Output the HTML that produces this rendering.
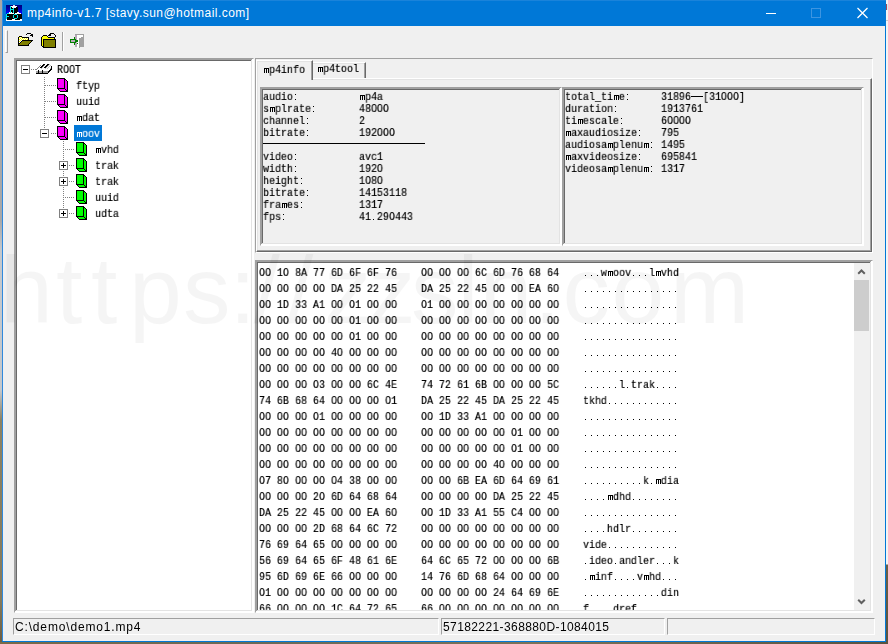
<!DOCTYPE html>
<html><head><meta charset="utf-8"><title>mp4info</title>
<style>
*{margin:0;padding:0;box-sizing:border-box}
html,body{width:888px;height:644px;overflow:hidden}
body{position:relative;background:#f0f0f0;font-family:"Liberation Sans",sans-serif;font-size:12px;color:#000}
body div,body span,body svg{position:absolute}
svg{overflow:visible}
#desk-l{left:0;top:0;width:2px;height:644px;background:linear-gradient(#a8a8a8 0,#a8a8a8 220px,#c4c8cc 250px,#c4c8cc 390px,#8c8263 420px,#857a5c 600px,#6b5c40 100%)}
#desk-b{left:0;top:642px;width:888px;height:2px;background:linear-gradient(90deg,#7a6a48,#6a6a58 30%,#7c7258 60%,#5a5340 100%)}
#desk-r{left:886px;top:0;width:2px;height:644px;background:linear-gradient(#f4f4f4 0,#f4f4f4 564px,#6a6048 565px,#5a5340 100%)}
#bl{left:2px;top:0;width:1px;height:642px;background:#2f89dd}
#bt{left:2px;top:0;width:884px;height:1px;background:#1a83da}
#br{left:885px;top:0;width:1px;height:642px;background:#0078d7}
#bb{left:2px;top:641px;width:884px;height:1px;background:#0078d7}
#title{left:3px;top:0;width:882px;height:26px;background:#0078d7}
#ttext{left:27px;top:6px;color:#fff;font-size:12px;white-space:nowrap;line-height:15px;letter-spacing:.46px}
.m{will-change:transform;-webkit-text-stroke:.2px #000;font-family:"Liberation Mono",monospace;font-size:12px;line-height:12px;white-space:pre;transform:translateY(1px) scale(.8333,.889);transform-origin:0 0;color:#000}
.w{color:#fff;-webkit-text-stroke-color:#fff}
.sel{width:28px;height:16px;background:#0078d7}
.sunk{border:1px solid;border-color:#a0a0a0 #fff #fff #a0a0a0;box-shadow:inset -1px -1px 0 #fff,inset 1px 1px 0 #a0a0a0,inset -2px -2px 0 #e3e3e3,inset 2px 2px 0 #696969}
.sunk>.in{left:2px;top:2px;right:2px;bottom:2px;overflow:hidden}
.pane{height:17px;border:1px solid;border-color:#a0a0a0 #fff #fff #a0a0a0}
.hr{left:0;height:12px;width:600px}
.st{font-size:12px;line-height:14px;white-space:nowrap}
#wm{left:0;top:235px;width:888px;height:110px;font-size:95px;line-height:110px;color:rgba(0,0,0,.04);white-space:nowrap}
#wm span{top:0}
</style></head><body>
<div id="desk-l"></div><div id="desk-b"></div><div id="desk-r"></div>
<div style="left:886px;top:4px;width:1px;height:6px;background:#a04858"></div><div style="left:887px;top:4px;width:1px;height:6px;background:#c8f0f8"></div><div style="left:886px;top:20px;width:2px;height:1px;background:#c8c8c8"></div><div id="bl"></div><div id="br"></div><div id="bb"></div>
<div id="title"></div><div id="bt"></div>
<div id="ttext">mp4info-v1.7 [stavy.sun@hotmail.com]</div>
<!-- app icon -->
<div style="left:6px;top:5px;width:16px;height:16px;background:linear-gradient(#000078 0,#0000a8 25%,#0000f0 45%,#0000ff 100%)"></div><svg style="left:6px;top:5px" width="16" height="16" viewBox="0 0 16 16" shape-rendering="crispEdges"><path fill="#e8e0e8" d="M7 0h2v1h-2z"/><path fill="#00e8e8" d="M4 1h1v1h-1zM4 2h1v1h-1zM4 3h1v1h-1zM7 3h1v1h-1zM4 4h4v1h-4zM4 5h1v1h-1zM7 5h1v1h-1zM4 6h1v1h-1zM7 6h1v1h-1zM4 7h1v1h-1zM7 7h1v1h-1zM1 8h2v1h-2zM0 9h1v1h-1zM8 9h3v1h-3zM0 10h1v1h-1zM7 10h1v1h-1zM11 10h1v1h-1zM0 11h3v1h-3zM7 11h1v1h-1zM11 11h1v1h-1zM0 12h1v1h-1zM7 12h1v1h-1zM11 12h1v1h-1zM0 13h1v1h-1zM8 13h3v1h-3z"/><path fill="#fff" d="M5 1h6v1h-6zM6 2h4v1h-4zM3 7h1v1h-1zM5 7h1v1h-1zM11 7h2v1h-2zM3 8h5v1h-5zM9 8h6v1h-6zM0 14h1v1h-1zM6 14h3v1h-3zM14 14h2v1h-2zM0 15h16v1h-16z"/><path fill="#000" d="M5 2h1v1h-1zM10 2h2v1h-2zM5 3h2v1h-2zM8 3h4v1h-4zM8 4h4v1h-4zM5 5h2v1h-2zM8 5h4v1h-4zM5 6h2v1h-2zM8 6h4v1h-4zM6 7h1v1h-1zM8 7h3v1h-3zM8 8h1v1h-1zM1 9h7v1h-7zM11 9h5v1h-5zM1 10h6v1h-6zM8 10h3v1h-3zM12 10h4v1h-4zM3 11h4v1h-4zM8 11h3v1h-3zM12 11h4v1h-4zM1 12h6v1h-6zM8 12h3v1h-3zM12 12h4v1h-4zM1 13h7v1h-7zM11 13h5v1h-5zM1 14h5v1h-5zM9 14h5v1h-5z"/></svg>
<!-- caption buttons -->
<svg style="left:760px;top:0" width="125" height="26" viewBox="0 0 125 26">
 <path d="M6 13.5H16" stroke="#fff" stroke-width="1" fill="none" shape-rendering="crispEdges"/>
 <rect x="51.5" y="8.5" width="9" height="9" stroke="#3d95e1" stroke-width="1" fill="none" shape-rendering="crispEdges"/>
 <path d="M97.5 8L107.5 18M107.5 8L97.5 18" stroke="#fff" stroke-width="1.25" fill="none"/>
</svg>
<!-- toolbar -->
<div style="left:5px;top:30px;width:3px;height:23px;border:1px solid;border-color:#fff #a0a0a0 #a0a0a0 #fff"></div>
<div style="left:62px;top:32px;width:2px;height:19px;border-left:1px solid #a0a0a0;border-right:1px solid #fff"></div>
<svg style="left:18px;top:33px" width="15" height="13" viewBox="0 0 15 13" shape-rendering="crispEdges"><path fill="#000" d="M9 0h4v1h-4zM8 1h1v1h-1zM13 1h2v1h-2zM12 2h3v1h-3zM1 3h3v1h-3zM14 3h1v1h-1zM0 4h1v1h-1zM4 4h7v1h-7zM0 5h1v1h-1zM10 5h1v1h-1zM0 6h1v1h-1zM10 6h1v1h-1zM0 7h1v1h-1zM4 7h11v1h-11zM0 8h1v1h-1zM3 8h1v1h-1zM13 8h1v1h-1zM0 9h1v1h-1zM2 9h1v1h-1zM12 9h1v1h-1zM0 10h2v1h-2zM11 10h1v1h-1zM0 11h1v1h-1zM10 11h1v1h-1zM0 12h11v1h-11z"/><path fill="#ffff00" d="M1 4h1v1h-1zM3 4h1v1h-1zM2 5h1v1h-1zM4 5h1v1h-1zM6 5h1v1h-1zM8 5h1v1h-1zM1 6h1v1h-1zM3 6h1v1h-1zM5 6h1v1h-1zM7 6h1v1h-1zM9 6h1v1h-1zM2 7h1v1h-1zM1 8h1v1h-1z"/><path fill="#fff" d="M2 4h1v1h-1zM1 5h1v1h-1zM3 5h1v1h-1zM5 5h1v1h-1zM7 5h1v1h-1zM9 5h1v1h-1zM2 6h1v1h-1zM4 6h1v1h-1zM6 6h1v1h-1zM8 6h1v1h-1zM1 7h1v1h-1zM3 7h1v1h-1zM2 8h1v1h-1zM1 9h1v1h-1z"/><path fill="#808000" d="M4 8h9v1h-9zM3 9h9v1h-9zM2 10h9v1h-9zM1 11h9v1h-9z"/></svg><svg style="left:41px;top:33px" width="15" height="15" viewBox="0 0 15 15" shape-rendering="crispEdges"><path fill="#000" d="M9 0h4v1h-4zM8 1h2v1h-2zM13 1h1v1h-1zM2 2h4v1h-4zM7 2h3v1h-3zM14 2h1v1h-1zM1 3h1v1h-1zM6 3h1v1h-1zM14 3h1v1h-1zM0 4h1v1h-1zM7 4h7v1h-7zM0 5h1v1h-1zM13 5h1v1h-1zM0 6h1v1h-1zM2 6h13v1h-13zM0 7h1v1h-1zM2 7h1v1h-1zM14 7h1v1h-1zM0 8h1v1h-1zM2 8h1v1h-1zM14 8h1v1h-1zM0 9h1v1h-1zM2 9h1v1h-1zM14 9h1v1h-1zM0 10h1v1h-1zM2 10h1v1h-1zM14 10h1v1h-1zM0 11h1v1h-1zM2 11h1v1h-1zM14 11h1v1h-1zM0 12h1v1h-1zM2 12h1v1h-1zM14 12h1v1h-1zM1 13h2v1h-2zM14 13h1v1h-1zM2 14h13v1h-13z"/><path fill="#ffff00" d="M2 3h4v1h-4zM1 4h6v1h-6zM1 5h12v1h-12zM1 6h1v1h-1zM1 7h1v1h-1zM1 8h1v1h-1zM1 9h1v1h-1zM1 10h1v1h-1zM1 11h1v1h-1zM1 12h1v1h-1z"/><path fill="#808000" d="M3 7h11v1h-11zM3 8h11v1h-11zM3 9h11v1h-11zM3 10h11v1h-11zM3 11h11v1h-11zM3 12h11v1h-11zM3 13h11v1h-11z"/></svg><svg style="left:70px;top:34px" width="14" height="14" viewBox="0 0 14 14" shape-rendering="crispEdges"><path fill="#a0a0a0" d="M5 0h9v1h-9zM13 1h1v1h-1zM13 2h1v1h-1zM11 3h3v1h-3zM9 4h5v1h-5zM9 5h5v1h-5zM9 6h5v1h-5zM9 7h5v1h-5zM9 8h5v1h-5zM9 9h5v1h-5zM9 10h5v1h-5zM9 11h5v1h-5zM9 12h5v1h-5zM9 13h1v1h-1z"/><path fill="#b8a8b8" d="M5 1h2v1h-2zM5 2h2v1h-2zM5 3h2v1h-2zM5 4h2v1h-2zM6 5h1v1h-1zM1 6h4v1h-4zM1 7h4v1h-4zM6 8h1v1h-1zM5 9h2v1h-2zM5 10h2v1h-2zM5 11h2v1h-2zM5 12h2v1h-2z"/><path fill="#fff" d="M7 1h6v1h-6zM7 2h6v1h-6zM7 3h4v1h-4zM7 4h2v1h-2zM7 5h2v1h-2zM8 6h1v1h-1zM8 7h1v1h-1zM7 8h2v1h-2zM8 9h1v1h-1zM7 10h2v1h-2zM7 11h2v1h-2zM7 12h2v1h-2zM7 13h2v1h-2z"/><path fill="#008000" d="M4 3h1v1h-1zM4 4h1v1h-1zM0 5h6v1h-6zM0 6h1v1h-1zM5 6h3v1h-3zM0 7h1v1h-1zM5 7h3v1h-3zM0 8h6v1h-6zM4 9h1v1h-1zM7 9h1v1h-1zM4 10h1v1h-1z"/></svg>

<!-- tree -->
<div class="sunk" style="left:14px;top:58px;width:240px;height:555px"><div class="in" style="background:#fff"></div></div>
<div style="left:44px;top:77px;width:1px;height:51px;background:repeating-linear-gradient(180deg,#808080 0 1px,transparent 1px 2px)"></div>
<div style="left:63px;top:141px;width:1px;height:69px;background:repeating-linear-gradient(180deg,#808080 0 1px,transparent 1px 2px)"></div>
<div style="left:31px;top:69px;width:5px;height:1px;background:repeating-linear-gradient(90deg,#808080 0 1px,transparent 1px 2px)"></div>
<div style="left:21px;top:65px;width:9px;height:9px;border:1px solid #808080;background:#fff"></div><div style="left:23px;top:69px;width:5px;height:1px;background:#000"></div>
<svg style="left:36px;top:64px" width="17" height="10" viewBox="0 0 17 10" shape-rendering="crispEdges"><path fill="#000" d="M7 0h2v1h-2zM11 0h2v1h-2zM6 1h2v1h-2zM10 1h2v1h-2zM5 2h2v1h-2zM9 2h2v1h-2zM15 2h1v1h-1zM4 3h2v1h-2zM8 3h2v1h-2zM15 3h1v1h-1zM15 4h1v1h-1zM14 5h2v1h-2zM2 6h1v1h-1zM6 6h1v1h-1zM13 6h2v1h-2zM2 7h1v1h-1zM6 7h1v1h-1zM12 7h2v1h-2zM2 8h1v1h-1zM6 8h1v1h-1zM12 8h1v1h-1zM0 9h12v1h-12z"/><path fill="#c0c0c0" d="M13 0h1v1h-1zM8 1h1v1h-1zM12 1h1v1h-1zM14 1h1v1h-1zM7 2h1v1h-1zM11 2h1v1h-1zM13 2h1v1h-1zM6 3h1v1h-1zM10 3h1v1h-1zM12 3h1v1h-1zM5 4h1v1h-1zM9 4h1v1h-1zM11 4h1v1h-1zM14 4h1v1h-1z"/><path fill="#808080" d="M4 1h1v1h-1zM3 2h1v1h-1zM2 3h1v1h-1zM1 4h1v1h-1zM0 5h1v1h-1z"/><path fill="#a0a0a0" d="M0 7h2v1h-2zM3 7h3v1h-3zM7 7h5v1h-5zM0 8h2v1h-2zM3 8h3v1h-3zM7 8h5v1h-5z"/></svg>
<span class="m" style="left:57px;top:64px">ROOT</span>
<div style="left:45px;top:85px;width:11px;height:1px;background:repeating-linear-gradient(90deg,#808080 0 1px,transparent 1px 2px)"></div>
<svg style="left:57px;top:78px" width="11" height="14" viewBox="0 0 11 14" shape-rendering="crispEdges"><path fill="#000" d="M0 0h8v1h-8zM0 1h1v1h-1zM7 1h2v1h-2zM0 2h1v1h-1zM7 2h1v1h-1zM9 2h1v1h-1zM0 3h1v1h-1zM7 3h1v1h-1zM10 3h1v1h-1zM0 4h1v1h-1zM7 4h1v1h-1zM10 4h1v1h-1zM0 5h1v1h-1zM7 5h1v1h-1zM10 5h1v1h-1zM0 6h1v1h-1zM7 6h1v1h-1zM10 6h1v1h-1zM0 7h1v1h-1zM7 7h1v1h-1zM10 7h1v1h-1zM0 8h1v1h-1zM7 8h1v1h-1zM10 8h1v1h-1zM0 9h1v1h-1zM7 9h1v1h-1zM10 9h1v1h-1zM0 10h8v1h-8zM10 10h1v1h-1zM1 11h1v1h-1zM8 11h1v1h-1zM10 11h1v1h-1zM2 12h1v1h-1zM9 12h2v1h-2zM3 13h8v1h-8z"/><path fill="#ff00ff" d="M1 1h6v1h-6zM1 2h6v1h-6zM8 2h1v1h-1zM1 3h6v1h-6zM8 3h2v1h-2zM1 4h6v1h-6zM8 4h2v1h-2zM1 5h6v1h-6zM8 5h2v1h-2zM1 6h6v1h-6zM8 6h2v1h-2zM1 7h6v1h-6zM8 7h2v1h-2zM1 8h6v1h-6zM8 8h2v1h-2zM1 9h6v1h-6zM8 9h2v1h-2zM8 10h2v1h-2zM2 11h6v1h-6zM9 11h1v1h-1zM3 12h6v1h-6z"/></svg>
<span class="m" style="left:76px;top:80px">ftyp</span>
<div style="left:45px;top:101px;width:11px;height:1px;background:repeating-linear-gradient(90deg,#808080 0 1px,transparent 1px 2px)"></div>
<svg style="left:57px;top:94px" width="11" height="14" viewBox="0 0 11 14" shape-rendering="crispEdges"><path fill="#000" d="M0 0h8v1h-8zM0 1h1v1h-1zM7 1h2v1h-2zM0 2h1v1h-1zM7 2h1v1h-1zM9 2h1v1h-1zM0 3h1v1h-1zM7 3h1v1h-1zM10 3h1v1h-1zM0 4h1v1h-1zM7 4h1v1h-1zM10 4h1v1h-1zM0 5h1v1h-1zM7 5h1v1h-1zM10 5h1v1h-1zM0 6h1v1h-1zM7 6h1v1h-1zM10 6h1v1h-1zM0 7h1v1h-1zM7 7h1v1h-1zM10 7h1v1h-1zM0 8h1v1h-1zM7 8h1v1h-1zM10 8h1v1h-1zM0 9h1v1h-1zM7 9h1v1h-1zM10 9h1v1h-1zM0 10h8v1h-8zM10 10h1v1h-1zM1 11h1v1h-1zM8 11h1v1h-1zM10 11h1v1h-1zM2 12h1v1h-1zM9 12h2v1h-2zM3 13h8v1h-8z"/><path fill="#ff00ff" d="M1 1h6v1h-6zM1 2h6v1h-6zM8 2h1v1h-1zM1 3h6v1h-6zM8 3h2v1h-2zM1 4h6v1h-6zM8 4h2v1h-2zM1 5h6v1h-6zM8 5h2v1h-2zM1 6h6v1h-6zM8 6h2v1h-2zM1 7h6v1h-6zM8 7h2v1h-2zM1 8h6v1h-6zM8 8h2v1h-2zM1 9h6v1h-6zM8 9h2v1h-2zM8 10h2v1h-2zM2 11h6v1h-6zM9 11h1v1h-1zM3 12h6v1h-6z"/></svg>
<span class="m" style="left:76px;top:96px">uuid</span>
<div style="left:45px;top:117px;width:11px;height:1px;background:repeating-linear-gradient(90deg,#808080 0 1px,transparent 1px 2px)"></div>
<svg style="left:57px;top:110px" width="11" height="14" viewBox="0 0 11 14" shape-rendering="crispEdges"><path fill="#000" d="M0 0h8v1h-8zM0 1h1v1h-1zM7 1h2v1h-2zM0 2h1v1h-1zM7 2h1v1h-1zM9 2h1v1h-1zM0 3h1v1h-1zM7 3h1v1h-1zM10 3h1v1h-1zM0 4h1v1h-1zM7 4h1v1h-1zM10 4h1v1h-1zM0 5h1v1h-1zM7 5h1v1h-1zM10 5h1v1h-1zM0 6h1v1h-1zM7 6h1v1h-1zM10 6h1v1h-1zM0 7h1v1h-1zM7 7h1v1h-1zM10 7h1v1h-1zM0 8h1v1h-1zM7 8h1v1h-1zM10 8h1v1h-1zM0 9h1v1h-1zM7 9h1v1h-1zM10 9h1v1h-1zM0 10h8v1h-8zM10 10h1v1h-1zM1 11h1v1h-1zM8 11h1v1h-1zM10 11h1v1h-1zM2 12h1v1h-1zM9 12h2v1h-2zM3 13h8v1h-8z"/><path fill="#ff00ff" d="M1 1h6v1h-6zM1 2h6v1h-6zM8 2h1v1h-1zM1 3h6v1h-6zM8 3h2v1h-2zM1 4h6v1h-6zM8 4h2v1h-2zM1 5h6v1h-6zM8 5h2v1h-2zM1 6h6v1h-6zM8 6h2v1h-2zM1 7h6v1h-6zM8 7h2v1h-2zM1 8h6v1h-6zM8 8h2v1h-2zM1 9h6v1h-6zM8 9h2v1h-2zM8 10h2v1h-2zM2 11h6v1h-6zM9 11h1v1h-1zM3 12h6v1h-6z"/></svg>
<span class="m" style="left:76px;top:112px"> dat</span><svg style="left:76px;top:115px" width="24" height="6" viewBox="0 0 24 6" shape-rendering="crispEdges"><path fill="#000" d="M1 1h5v1h-5zM1 2h1v1h-1zM3 2h1v1h-1zM5 2h1v1h-1zM1 3h1v1h-1zM3 3h1v1h-1zM5 3h1v1h-1zM1 4h1v1h-1zM3 4h1v1h-1zM5 4h1v1h-1zM1 5h1v1h-1zM3 5h1v1h-1zM5 5h1v1h-1z"/></svg>
<div style="left:51px;top:133px;width:5px;height:1px;background:repeating-linear-gradient(90deg,#808080 0 1px,transparent 1px 2px)"></div>
<div style="left:40px;top:129px;width:9px;height:9px;border:1px solid #808080;background:#fff"></div><div style="left:42px;top:133px;width:5px;height:1px;background:#000"></div>
<svg style="left:57px;top:126px" width="11" height="14" viewBox="0 0 11 14" shape-rendering="crispEdges"><path fill="#000" d="M0 0h8v1h-8zM0 1h1v1h-1zM7 1h2v1h-2zM0 2h1v1h-1zM7 2h1v1h-1zM9 2h1v1h-1zM0 3h1v1h-1zM7 3h1v1h-1zM10 3h1v1h-1zM0 4h1v1h-1zM7 4h1v1h-1zM10 4h1v1h-1zM0 5h1v1h-1zM7 5h1v1h-1zM10 5h1v1h-1zM0 6h1v1h-1zM7 6h1v1h-1zM10 6h1v1h-1zM0 7h1v1h-1zM7 7h1v1h-1zM10 7h1v1h-1zM0 8h1v1h-1zM7 8h1v1h-1zM10 8h1v1h-1zM0 9h1v1h-1zM7 9h1v1h-1zM10 9h1v1h-1zM0 10h8v1h-8zM10 10h1v1h-1zM1 11h1v1h-1zM8 11h1v1h-1zM10 11h1v1h-1zM2 12h1v1h-1zM9 12h2v1h-2zM3 13h8v1h-8z"/><path fill="#ff00ff" d="M1 1h6v1h-6zM1 2h6v1h-6zM8 2h1v1h-1zM1 3h6v1h-6zM8 3h2v1h-2zM1 4h6v1h-6zM8 4h2v1h-2zM1 5h6v1h-6zM8 5h2v1h-2zM1 6h6v1h-6zM8 6h2v1h-2zM1 7h6v1h-6zM8 7h2v1h-2zM1 8h6v1h-6zM8 8h2v1h-2zM1 9h6v1h-6zM8 9h2v1h-2zM8 10h2v1h-2zM2 11h6v1h-6zM9 11h1v1h-1zM3 12h6v1h-6z"/></svg>
<div class="sel" style="left:74px;top:125px"></div><span class="m w" style="left:76px;top:128px"> oov</span><svg style="left:76px;top:131px" width="24" height="6" viewBox="0 0 24 6" shape-rendering="crispEdges"><path fill="#fff" d="M1 1h5v1h-5zM1 2h1v1h-1zM3 2h1v1h-1zM5 2h1v1h-1zM1 3h1v1h-1zM3 3h1v1h-1zM5 3h1v1h-1zM1 4h1v1h-1zM3 4h1v1h-1zM5 4h1v1h-1zM1 5h1v1h-1zM3 5h1v1h-1zM5 5h1v1h-1z"/></svg>
<div style="left:65px;top:149px;width:10px;height:1px;background:repeating-linear-gradient(90deg,#808080 0 1px,transparent 1px 2px)"></div>
<svg style="left:76px;top:142px" width="11" height="14" viewBox="0 0 11 14" shape-rendering="crispEdges"><path fill="#000" d="M0 0h8v1h-8zM0 1h1v1h-1zM7 1h2v1h-2zM0 2h1v1h-1zM7 2h1v1h-1zM9 2h1v1h-1zM0 3h1v1h-1zM7 3h1v1h-1zM10 3h1v1h-1zM0 4h1v1h-1zM7 4h1v1h-1zM10 4h1v1h-1zM0 5h1v1h-1zM7 5h1v1h-1zM10 5h1v1h-1zM0 6h1v1h-1zM7 6h1v1h-1zM10 6h1v1h-1zM0 7h1v1h-1zM7 7h1v1h-1zM10 7h1v1h-1zM0 8h1v1h-1zM7 8h1v1h-1zM10 8h1v1h-1zM0 9h1v1h-1zM7 9h1v1h-1zM10 9h1v1h-1zM0 10h8v1h-8zM10 10h1v1h-1zM1 11h1v1h-1zM8 11h1v1h-1zM10 11h1v1h-1zM2 12h1v1h-1zM9 12h2v1h-2zM3 13h8v1h-8z"/><path fill="#00ff00" d="M1 1h6v1h-6zM1 2h6v1h-6zM8 2h1v1h-1zM1 3h6v1h-6zM8 3h2v1h-2zM1 4h6v1h-6zM8 4h2v1h-2zM1 5h6v1h-6zM8 5h2v1h-2zM1 6h6v1h-6zM8 6h2v1h-2zM1 7h6v1h-6zM8 7h2v1h-2zM1 8h6v1h-6zM8 8h2v1h-2zM1 9h6v1h-6zM8 9h2v1h-2zM8 10h2v1h-2zM2 11h6v1h-6zM9 11h1v1h-1zM3 12h6v1h-6z"/></svg>
<span class="m" style="left:95px;top:144px"> vhd</span><svg style="left:95px;top:147px" width="24" height="6" viewBox="0 0 24 6" shape-rendering="crispEdges"><path fill="#000" d="M1 1h5v1h-5zM1 2h1v1h-1zM3 2h1v1h-1zM5 2h1v1h-1zM1 3h1v1h-1zM3 3h1v1h-1zM5 3h1v1h-1zM1 4h1v1h-1zM3 4h1v1h-1zM5 4h1v1h-1zM1 5h1v1h-1zM3 5h1v1h-1zM5 5h1v1h-1z"/></svg>
<div style="left:69px;top:165px;width:6px;height:1px;background:repeating-linear-gradient(90deg,#808080 0 1px,transparent 1px 2px)"></div>
<div style="left:59px;top:161px;width:9px;height:9px;border:1px solid #808080;background:#fff"></div><div style="left:61px;top:165px;width:5px;height:1px;background:#000"></div><div style="left:63px;top:163px;width:1px;height:5px;background:#000"></div>
<svg style="left:76px;top:158px" width="11" height="14" viewBox="0 0 11 14" shape-rendering="crispEdges"><path fill="#000" d="M0 0h8v1h-8zM0 1h1v1h-1zM7 1h2v1h-2zM0 2h1v1h-1zM7 2h1v1h-1zM9 2h1v1h-1zM0 3h1v1h-1zM7 3h1v1h-1zM10 3h1v1h-1zM0 4h1v1h-1zM7 4h1v1h-1zM10 4h1v1h-1zM0 5h1v1h-1zM7 5h1v1h-1zM10 5h1v1h-1zM0 6h1v1h-1zM7 6h1v1h-1zM10 6h1v1h-1zM0 7h1v1h-1zM7 7h1v1h-1zM10 7h1v1h-1zM0 8h1v1h-1zM7 8h1v1h-1zM10 8h1v1h-1zM0 9h1v1h-1zM7 9h1v1h-1zM10 9h1v1h-1zM0 10h8v1h-8zM10 10h1v1h-1zM1 11h1v1h-1zM8 11h1v1h-1zM10 11h1v1h-1zM2 12h1v1h-1zM9 12h2v1h-2zM3 13h8v1h-8z"/><path fill="#00ff00" d="M1 1h6v1h-6zM1 2h6v1h-6zM8 2h1v1h-1zM1 3h6v1h-6zM8 3h2v1h-2zM1 4h6v1h-6zM8 4h2v1h-2zM1 5h6v1h-6zM8 5h2v1h-2zM1 6h6v1h-6zM8 6h2v1h-2zM1 7h6v1h-6zM8 7h2v1h-2zM1 8h6v1h-6zM8 8h2v1h-2zM1 9h6v1h-6zM8 9h2v1h-2zM8 10h2v1h-2zM2 11h6v1h-6zM9 11h1v1h-1zM3 12h6v1h-6z"/></svg>
<span class="m" style="left:95px;top:160px">trak</span>
<div style="left:69px;top:181px;width:6px;height:1px;background:repeating-linear-gradient(90deg,#808080 0 1px,transparent 1px 2px)"></div>
<div style="left:59px;top:177px;width:9px;height:9px;border:1px solid #808080;background:#fff"></div><div style="left:61px;top:181px;width:5px;height:1px;background:#000"></div><div style="left:63px;top:179px;width:1px;height:5px;background:#000"></div>
<svg style="left:76px;top:174px" width="11" height="14" viewBox="0 0 11 14" shape-rendering="crispEdges"><path fill="#000" d="M0 0h8v1h-8zM0 1h1v1h-1zM7 1h2v1h-2zM0 2h1v1h-1zM7 2h1v1h-1zM9 2h1v1h-1zM0 3h1v1h-1zM7 3h1v1h-1zM10 3h1v1h-1zM0 4h1v1h-1zM7 4h1v1h-1zM10 4h1v1h-1zM0 5h1v1h-1zM7 5h1v1h-1zM10 5h1v1h-1zM0 6h1v1h-1zM7 6h1v1h-1zM10 6h1v1h-1zM0 7h1v1h-1zM7 7h1v1h-1zM10 7h1v1h-1zM0 8h1v1h-1zM7 8h1v1h-1zM10 8h1v1h-1zM0 9h1v1h-1zM7 9h1v1h-1zM10 9h1v1h-1zM0 10h8v1h-8zM10 10h1v1h-1zM1 11h1v1h-1zM8 11h1v1h-1zM10 11h1v1h-1zM2 12h1v1h-1zM9 12h2v1h-2zM3 13h8v1h-8z"/><path fill="#00ff00" d="M1 1h6v1h-6zM1 2h6v1h-6zM8 2h1v1h-1zM1 3h6v1h-6zM8 3h2v1h-2zM1 4h6v1h-6zM8 4h2v1h-2zM1 5h6v1h-6zM8 5h2v1h-2zM1 6h6v1h-6zM8 6h2v1h-2zM1 7h6v1h-6zM8 7h2v1h-2zM1 8h6v1h-6zM8 8h2v1h-2zM1 9h6v1h-6zM8 9h2v1h-2zM8 10h2v1h-2zM2 11h6v1h-6zM9 11h1v1h-1zM3 12h6v1h-6z"/></svg>
<span class="m" style="left:95px;top:176px">trak</span>
<div style="left:65px;top:197px;width:10px;height:1px;background:repeating-linear-gradient(90deg,#808080 0 1px,transparent 1px 2px)"></div>
<svg style="left:76px;top:190px" width="11" height="14" viewBox="0 0 11 14" shape-rendering="crispEdges"><path fill="#000" d="M0 0h8v1h-8zM0 1h1v1h-1zM7 1h2v1h-2zM0 2h1v1h-1zM7 2h1v1h-1zM9 2h1v1h-1zM0 3h1v1h-1zM7 3h1v1h-1zM10 3h1v1h-1zM0 4h1v1h-1zM7 4h1v1h-1zM10 4h1v1h-1zM0 5h1v1h-1zM7 5h1v1h-1zM10 5h1v1h-1zM0 6h1v1h-1zM7 6h1v1h-1zM10 6h1v1h-1zM0 7h1v1h-1zM7 7h1v1h-1zM10 7h1v1h-1zM0 8h1v1h-1zM7 8h1v1h-1zM10 8h1v1h-1zM0 9h1v1h-1zM7 9h1v1h-1zM10 9h1v1h-1zM0 10h8v1h-8zM10 10h1v1h-1zM1 11h1v1h-1zM8 11h1v1h-1zM10 11h1v1h-1zM2 12h1v1h-1zM9 12h2v1h-2zM3 13h8v1h-8z"/><path fill="#00ff00" d="M1 1h6v1h-6zM1 2h6v1h-6zM8 2h1v1h-1zM1 3h6v1h-6zM8 3h2v1h-2zM1 4h6v1h-6zM8 4h2v1h-2zM1 5h6v1h-6zM8 5h2v1h-2zM1 6h6v1h-6zM8 6h2v1h-2zM1 7h6v1h-6zM8 7h2v1h-2zM1 8h6v1h-6zM8 8h2v1h-2zM1 9h6v1h-6zM8 9h2v1h-2zM8 10h2v1h-2zM2 11h6v1h-6zM9 11h1v1h-1zM3 12h6v1h-6z"/></svg>
<span class="m" style="left:95px;top:192px">uuid</span>
<div style="left:69px;top:213px;width:6px;height:1px;background:repeating-linear-gradient(90deg,#808080 0 1px,transparent 1px 2px)"></div>
<div style="left:59px;top:209px;width:9px;height:9px;border:1px solid #808080;background:#fff"></div><div style="left:61px;top:213px;width:5px;height:1px;background:#000"></div><div style="left:63px;top:211px;width:1px;height:5px;background:#000"></div>
<svg style="left:76px;top:206px" width="11" height="14" viewBox="0 0 11 14" shape-rendering="crispEdges"><path fill="#000" d="M0 0h8v1h-8zM0 1h1v1h-1zM7 1h2v1h-2zM0 2h1v1h-1zM7 2h1v1h-1zM9 2h1v1h-1zM0 3h1v1h-1zM7 3h1v1h-1zM10 3h1v1h-1zM0 4h1v1h-1zM7 4h1v1h-1zM10 4h1v1h-1zM0 5h1v1h-1zM7 5h1v1h-1zM10 5h1v1h-1zM0 6h1v1h-1zM7 6h1v1h-1zM10 6h1v1h-1zM0 7h1v1h-1zM7 7h1v1h-1zM10 7h1v1h-1zM0 8h1v1h-1zM7 8h1v1h-1zM10 8h1v1h-1zM0 9h1v1h-1zM7 9h1v1h-1zM10 9h1v1h-1zM0 10h8v1h-8zM10 10h1v1h-1zM1 11h1v1h-1zM8 11h1v1h-1zM10 11h1v1h-1zM2 12h1v1h-1zM9 12h2v1h-2zM3 13h8v1h-8z"/><path fill="#00ff00" d="M1 1h6v1h-6zM1 2h6v1h-6zM8 2h1v1h-1zM1 3h6v1h-6zM8 3h2v1h-2zM1 4h6v1h-6zM8 4h2v1h-2zM1 5h6v1h-6zM8 5h2v1h-2zM1 6h6v1h-6zM8 6h2v1h-2zM1 7h6v1h-6zM8 7h2v1h-2zM1 8h6v1h-6zM8 8h2v1h-2zM1 9h6v1h-6zM8 9h2v1h-2zM8 10h2v1h-2zM2 11h6v1h-6zM9 11h1v1h-1zM3 12h6v1h-6z"/></svg>
<span class="m" style="left:95px;top:208px">udta</span>

<!-- tab control -->
<div style="left:255px;top:58px;width:618px;height:195px;border:1px solid;border-color:#a0a0a0 #fff #fff #a0a0a0"></div>
<div style="left:256px;top:78px;width:616px;height:174px;border:1px solid;border-color:#fff #696969 #696969 #fff;box-shadow:inset -1px -1px 0 #a0a0a0,inset 1px 1px 0 #e3e3e3"></div>
<!-- tabs -->
<div style="left:313px;top:62px;width:53px;height:16px;border:1px solid;border-color:#fff #696969 transparent #fff;border-bottom:none;border-left:none;box-shadow:inset -1px 0 0 #a0a0a0,inset 0 1px 0 #e3e3e3"></div>
<div style="left:256px;top:60px;width:57px;height:20px;background:#f0f0f0;border:1px solid;border-color:#fff #696969 transparent #fff;border-bottom:none;box-shadow:inset -1px 0 0 #a0a0a0,inset 1px 1px 0 #e3e3e3"></div>
<span class="m" style="left:263px;top:64px"> p4info</span><svg style="left:263px;top:67px" width="42" height="6" viewBox="0 0 42 6" shape-rendering="crispEdges"><path fill="#000" d="M1 1h5v1h-5zM1 2h1v1h-1zM3 2h1v1h-1zM5 2h1v1h-1zM1 3h1v1h-1zM3 3h1v1h-1zM5 3h1v1h-1zM1 4h1v1h-1zM3 4h1v1h-1zM5 4h1v1h-1zM1 5h1v1h-1zM3 5h1v1h-1zM5 5h1v1h-1z"/></svg>
<span class="m" style="left:317px;top:63px"> p4tool</span><svg style="left:317px;top:66px" width="42" height="6" viewBox="0 0 42 6" shape-rendering="crispEdges"><path fill="#000" d="M1 1h5v1h-5zM1 2h1v1h-1zM3 2h1v1h-1zM5 2h1v1h-1zM1 3h1v1h-1zM3 3h1v1h-1zM5 3h1v1h-1zM1 4h1v1h-1zM3 4h1v1h-1zM5 4h1v1h-1zM1 5h1v1h-1zM3 5h1v1h-1zM5 5h1v1h-1z"/></svg>
<!-- info panels -->
<div class="sunk" style="left:260px;top:87px;width:302px;height:159px"><div class="in"></div></div>
<div class="sunk" style="left:562px;top:87px;width:302px;height:159px"><div class="in"></div></div>
<span class="m" style="left:263px;top:91px">audio </span><svg style="left:263px;top:94px" width="36" height="6" viewBox="0 0 36 6" shape-rendering="crispEdges"><path fill="#000" d="M32 0h1v1h-1zM32 5h1v1h-1z"/></svg><span class="m" style="left:359px;top:91px"> p4a</span><svg style="left:359px;top:94px" width="24" height="6" viewBox="0 0 24 6" shape-rendering="crispEdges"><path fill="#000" d="M1 1h5v1h-5zM1 2h1v1h-1zM3 2h1v1h-1zM5 2h1v1h-1zM1 3h1v1h-1zM3 3h1v1h-1zM5 3h1v1h-1zM1 4h1v1h-1zM3 4h1v1h-1zM5 4h1v1h-1zM1 5h1v1h-1zM3 5h1v1h-1zM5 5h1v1h-1z"/></svg>
<span class="m" style="left:263px;top:103px">s plrate </span><svg style="left:263px;top:106px" width="54" height="6" viewBox="0 0 54 6" shape-rendering="crispEdges"><path fill="#000" d="M50 0h1v1h-1zM7 1h5v1h-5zM7 2h1v1h-1zM9 2h1v1h-1zM11 2h1v1h-1zM7 3h1v1h-1zM9 3h1v1h-1zM11 3h1v1h-1zM7 4h1v1h-1zM9 4h1v1h-1zM11 4h1v1h-1zM7 5h1v1h-1zM9 5h1v1h-1zM11 5h1v1h-1zM50 5h1v1h-1z"/></svg><span class="m" style="left:359px;top:103px">48OOO</span>
<span class="m" style="left:263px;top:115px">channel </span><svg style="left:263px;top:118px" width="48" height="6" viewBox="0 0 48 6" shape-rendering="crispEdges"><path fill="#000" d="M44 0h1v1h-1zM44 5h1v1h-1z"/></svg><span class="m" style="left:359px;top:115px">2</span>
<span class="m" style="left:263px;top:127px">bitrate </span><svg style="left:263px;top:130px" width="48" height="6" viewBox="0 0 48 6" shape-rendering="crispEdges"><path fill="#000" d="M44 0h1v1h-1zM44 5h1v1h-1z"/></svg><span class="m" style="left:359px;top:127px">192OOO</span>
<div style="left:263px;top:143px;width:162px;height:1px;background:#000"></div>
<span class="m" style="left:263px;top:151px">video </span><svg style="left:263px;top:154px" width="36" height="6" viewBox="0 0 36 6" shape-rendering="crispEdges"><path fill="#000" d="M32 0h1v1h-1zM32 5h1v1h-1z"/></svg><span class="m" style="left:359px;top:151px">avc1</span>
<span class="m" style="left:263px;top:163px">width </span><svg style="left:263px;top:166px" width="36" height="6" viewBox="0 0 36 6" shape-rendering="crispEdges"><path fill="#000" d="M32 0h1v1h-1zM32 5h1v1h-1z"/></svg><span class="m" style="left:359px;top:163px">192O</span>
<span class="m" style="left:263px;top:175px">height </span><svg style="left:263px;top:178px" width="42" height="6" viewBox="0 0 42 6" shape-rendering="crispEdges"><path fill="#000" d="M38 0h1v1h-1zM38 5h1v1h-1z"/></svg><span class="m" style="left:359px;top:175px">1O8O</span>
<span class="m" style="left:263px;top:187px">bitrate </span><svg style="left:263px;top:190px" width="48" height="6" viewBox="0 0 48 6" shape-rendering="crispEdges"><path fill="#000" d="M44 0h1v1h-1zM44 5h1v1h-1z"/></svg><span class="m" style="left:359px;top:187px">14153118</span>
<span class="m" style="left:263px;top:199px">fra es </span><svg style="left:263px;top:202px" width="42" height="6" viewBox="0 0 42 6" shape-rendering="crispEdges"><path fill="#000" d="M38 0h1v1h-1zM19 1h5v1h-5zM19 2h1v1h-1zM21 2h1v1h-1zM23 2h1v1h-1zM19 3h1v1h-1zM21 3h1v1h-1zM23 3h1v1h-1zM19 4h1v1h-1zM21 4h1v1h-1zM23 4h1v1h-1zM19 5h1v1h-1zM21 5h1v1h-1zM23 5h1v1h-1zM38 5h1v1h-1z"/></svg><span class="m" style="left:359px;top:199px">1317</span>
<span class="m" style="left:263px;top:211px">fps </span><svg style="left:263px;top:214px" width="24" height="6" viewBox="0 0 24 6" shape-rendering="crispEdges"><path fill="#000" d="M20 0h1v1h-1zM20 5h1v1h-1z"/></svg><span class="m" style="left:359px;top:211px">41 29O443</span><svg style="left:359px;top:214px" width="54" height="6" viewBox="0 0 54 6" shape-rendering="crispEdges"><path fill="#000" d="M14 5h1v1h-1z"/></svg>
<span class="m" style="left:565px;top:91px">total_ti e </span><svg style="left:565px;top:94px" width="66" height="6" viewBox="0 0 66 6" shape-rendering="crispEdges"><path fill="#000" d="M62 0h1v1h-1zM49 1h5v1h-5zM49 2h1v1h-1zM51 2h1v1h-1zM53 2h1v1h-1zM49 3h1v1h-1zM51 3h1v1h-1zM53 3h1v1h-1zM49 4h1v1h-1zM51 4h1v1h-1zM53 4h1v1h-1zM49 5h1v1h-1zM51 5h1v1h-1zM53 5h1v1h-1zM62 5h1v1h-1z"/></svg><span class="m" style="left:661px;top:91px">31896</span>
<span class="m" style="left:565px;top:103px">duration </span><svg style="left:565px;top:106px" width="54" height="6" viewBox="0 0 54 6" shape-rendering="crispEdges"><path fill="#000" d="M50 0h1v1h-1zM50 5h1v1h-1z"/></svg><span class="m" style="left:661px;top:103px">1913761</span>
<span class="m" style="left:565px;top:115px">ti escale </span><svg style="left:565px;top:118px" width="60" height="6" viewBox="0 0 60 6" shape-rendering="crispEdges"><path fill="#000" d="M56 0h1v1h-1zM13 1h5v1h-5zM13 2h1v1h-1zM15 2h1v1h-1zM17 2h1v1h-1zM13 3h1v1h-1zM15 3h1v1h-1zM17 3h1v1h-1zM13 4h1v1h-1zM15 4h1v1h-1zM17 4h1v1h-1zM13 5h1v1h-1zM15 5h1v1h-1zM17 5h1v1h-1zM56 5h1v1h-1z"/></svg><span class="m" style="left:661px;top:115px">6OOOO</span>
<span class="m" style="left:565px;top:127px"> axaudiosize </span><svg style="left:565px;top:130px" width="78" height="6" viewBox="0 0 78 6" shape-rendering="crispEdges"><path fill="#000" d="M74 0h1v1h-1zM1 1h5v1h-5zM1 2h1v1h-1zM3 2h1v1h-1zM5 2h1v1h-1zM1 3h1v1h-1zM3 3h1v1h-1zM5 3h1v1h-1zM1 4h1v1h-1zM3 4h1v1h-1zM5 4h1v1h-1zM1 5h1v1h-1zM3 5h1v1h-1zM5 5h1v1h-1zM74 5h1v1h-1z"/></svg><span class="m" style="left:661px;top:127px">795</span>
<span class="m" style="left:565px;top:139px">audiosa plenu  </span><svg style="left:565px;top:142px" width="90" height="6" viewBox="0 0 90 6" shape-rendering="crispEdges"><path fill="#000" d="M86 0h1v1h-1zM43 1h5v1h-5zM79 1h5v1h-5zM43 2h1v1h-1zM45 2h1v1h-1zM47 2h1v1h-1zM79 2h1v1h-1zM81 2h1v1h-1zM83 2h1v1h-1zM43 3h1v1h-1zM45 3h1v1h-1zM47 3h1v1h-1zM79 3h1v1h-1zM81 3h1v1h-1zM83 3h1v1h-1zM43 4h1v1h-1zM45 4h1v1h-1zM47 4h1v1h-1zM79 4h1v1h-1zM81 4h1v1h-1zM83 4h1v1h-1zM43 5h1v1h-1zM45 5h1v1h-1zM47 5h1v1h-1zM79 5h1v1h-1zM81 5h1v1h-1zM83 5h1v1h-1zM86 5h1v1h-1z"/></svg><span class="m" style="left:661px;top:139px">1495</span>
<span class="m" style="left:565px;top:151px"> axvideosize </span><svg style="left:565px;top:154px" width="78" height="6" viewBox="0 0 78 6" shape-rendering="crispEdges"><path fill="#000" d="M74 0h1v1h-1zM1 1h5v1h-5zM1 2h1v1h-1zM3 2h1v1h-1zM5 2h1v1h-1zM1 3h1v1h-1zM3 3h1v1h-1zM5 3h1v1h-1zM1 4h1v1h-1zM3 4h1v1h-1zM5 4h1v1h-1zM1 5h1v1h-1zM3 5h1v1h-1zM5 5h1v1h-1zM74 5h1v1h-1z"/></svg><span class="m" style="left:661px;top:151px">695841</span>
<span class="m" style="left:565px;top:163px">videosa plenu  </span><svg style="left:565px;top:166px" width="90" height="6" viewBox="0 0 90 6" shape-rendering="crispEdges"><path fill="#000" d="M86 0h1v1h-1zM43 1h5v1h-5zM79 1h5v1h-5zM43 2h1v1h-1zM45 2h1v1h-1zM47 2h1v1h-1zM79 2h1v1h-1zM81 2h1v1h-1zM83 2h1v1h-1zM43 3h1v1h-1zM45 3h1v1h-1zM47 3h1v1h-1zM79 3h1v1h-1zM81 3h1v1h-1zM83 3h1v1h-1zM43 4h1v1h-1zM45 4h1v1h-1zM47 4h1v1h-1zM79 4h1v1h-1zM81 4h1v1h-1zM83 4h1v1h-1zM43 5h1v1h-1zM45 5h1v1h-1zM47 5h1v1h-1zM79 5h1v1h-1zM81 5h1v1h-1zM83 5h1v1h-1zM86 5h1v1h-1z"/></svg><span class="m" style="left:661px;top:163px">1317</span>
<div style="left:691px;top:96px;width:12px;height:1px;background:#000"></div><span class="m" style="left:703px;top:91px">[31OOO]</span>

<!-- hex -->
<div class="sunk" style="left:255px;top:260px;width:618px;height:353px"><div class="in" style="background:#fff">
<div class="hr" style="top:4px"><span class="m" style="left:0.5px">OO 1O 8A 77 6D 6F 6F 76</span><span class="m" style="left:162.5px">OO OO OO 6C 6D 76 68 64</span><span class="m" style="left:324.5px">   w oov   l vhd</span><svg style="left:325px;top:3px" width="96" height="6" viewBox="0 0 96 6" shape-rendering="crispEdges"><path fill="#000" d="M25 1h5v1h-5zM73 1h5v1h-5zM25 2h1v1h-1zM27 2h1v1h-1zM29 2h1v1h-1zM73 2h1v1h-1zM75 2h1v1h-1zM77 2h1v1h-1zM25 3h1v1h-1zM27 3h1v1h-1zM29 3h1v1h-1zM73 3h1v1h-1zM75 3h1v1h-1zM77 3h1v1h-1zM25 4h1v1h-1zM27 4h1v1h-1zM29 4h1v1h-1zM73 4h1v1h-1zM75 4h1v1h-1zM77 4h1v1h-1zM2 5h1v1h-1zM8 5h1v1h-1zM14 5h1v1h-1zM25 5h1v1h-1zM27 5h1v1h-1zM29 5h1v1h-1zM50 5h1v1h-1zM56 5h1v1h-1zM62 5h1v1h-1zM73 5h1v1h-1zM75 5h1v1h-1zM77 5h1v1h-1z"/></svg></div>
<div class="hr" style="top:20px"><span class="m" style="left:0.5px">OO OO OO OO DA 25 22 45</span><span class="m" style="left:162.5px">DA 25 22 45 OO OO EA 6O</span><span class="m" style="left:324.5px">                </span><svg style="left:325px;top:3px" width="96" height="6" viewBox="0 0 96 6" shape-rendering="crispEdges"><path fill="#000" d="M2 5h1v1h-1zM8 5h1v1h-1zM14 5h1v1h-1zM20 5h1v1h-1zM26 5h1v1h-1zM32 5h1v1h-1zM38 5h1v1h-1zM44 5h1v1h-1zM50 5h1v1h-1zM56 5h1v1h-1zM62 5h1v1h-1zM68 5h1v1h-1zM74 5h1v1h-1zM80 5h1v1h-1zM86 5h1v1h-1zM92 5h1v1h-1z"/></svg></div>
<div class="hr" style="top:36px"><span class="m" style="left:0.5px">OO 1D 33 A1 OO O1 OO OO</span><span class="m" style="left:162.5px">O1 OO OO OO OO OO OO OO</span><span class="m" style="left:324.5px">                </span><svg style="left:325px;top:3px" width="96" height="6" viewBox="0 0 96 6" shape-rendering="crispEdges"><path fill="#000" d="M2 5h1v1h-1zM8 5h1v1h-1zM14 5h1v1h-1zM20 5h1v1h-1zM26 5h1v1h-1zM32 5h1v1h-1zM38 5h1v1h-1zM44 5h1v1h-1zM50 5h1v1h-1zM56 5h1v1h-1zM62 5h1v1h-1zM68 5h1v1h-1zM74 5h1v1h-1zM80 5h1v1h-1zM86 5h1v1h-1zM92 5h1v1h-1z"/></svg></div>
<div class="hr" style="top:52px"><span class="m" style="left:0.5px">OO OO OO OO OO O1 OO OO</span><span class="m" style="left:162.5px">OO OO OO OO OO OO OO OO</span><span class="m" style="left:324.5px">                </span><svg style="left:325px;top:3px" width="96" height="6" viewBox="0 0 96 6" shape-rendering="crispEdges"><path fill="#000" d="M2 5h1v1h-1zM8 5h1v1h-1zM14 5h1v1h-1zM20 5h1v1h-1zM26 5h1v1h-1zM32 5h1v1h-1zM38 5h1v1h-1zM44 5h1v1h-1zM50 5h1v1h-1zM56 5h1v1h-1zM62 5h1v1h-1zM68 5h1v1h-1zM74 5h1v1h-1zM80 5h1v1h-1zM86 5h1v1h-1zM92 5h1v1h-1z"/></svg></div>
<div class="hr" style="top:68px"><span class="m" style="left:0.5px">OO OO OO OO OO O1 OO OO</span><span class="m" style="left:162.5px">OO OO OO OO OO OO OO OO</span><span class="m" style="left:324.5px">                </span><svg style="left:325px;top:3px" width="96" height="6" viewBox="0 0 96 6" shape-rendering="crispEdges"><path fill="#000" d="M2 5h1v1h-1zM8 5h1v1h-1zM14 5h1v1h-1zM20 5h1v1h-1zM26 5h1v1h-1zM32 5h1v1h-1zM38 5h1v1h-1zM44 5h1v1h-1zM50 5h1v1h-1zM56 5h1v1h-1zM62 5h1v1h-1zM68 5h1v1h-1zM74 5h1v1h-1zM80 5h1v1h-1zM86 5h1v1h-1zM92 5h1v1h-1z"/></svg></div>
<div class="hr" style="top:84px"><span class="m" style="left:0.5px">OO OO OO OO 4O OO OO OO</span><span class="m" style="left:162.5px">OO OO OO OO OO OO OO OO</span><span class="m" style="left:324.5px">                </span><svg style="left:325px;top:3px" width="96" height="6" viewBox="0 0 96 6" shape-rendering="crispEdges"><path fill="#000" d="M2 5h1v1h-1zM8 5h1v1h-1zM14 5h1v1h-1zM20 5h1v1h-1zM26 5h1v1h-1zM32 5h1v1h-1zM38 5h1v1h-1zM44 5h1v1h-1zM50 5h1v1h-1zM56 5h1v1h-1zM62 5h1v1h-1zM68 5h1v1h-1zM74 5h1v1h-1zM80 5h1v1h-1zM86 5h1v1h-1zM92 5h1v1h-1z"/></svg></div>
<div class="hr" style="top:100px"><span class="m" style="left:0.5px">OO OO OO OO OO OO OO OO</span><span class="m" style="left:162.5px">OO OO OO OO OO OO OO OO</span><span class="m" style="left:324.5px">                </span><svg style="left:325px;top:3px" width="96" height="6" viewBox="0 0 96 6" shape-rendering="crispEdges"><path fill="#000" d="M2 5h1v1h-1zM8 5h1v1h-1zM14 5h1v1h-1zM20 5h1v1h-1zM26 5h1v1h-1zM32 5h1v1h-1zM38 5h1v1h-1zM44 5h1v1h-1zM50 5h1v1h-1zM56 5h1v1h-1zM62 5h1v1h-1zM68 5h1v1h-1zM74 5h1v1h-1zM80 5h1v1h-1zM86 5h1v1h-1zM92 5h1v1h-1z"/></svg></div>
<div class="hr" style="top:116px"><span class="m" style="left:0.5px">OO OO OO O3 OO OO 6C 4E</span><span class="m" style="left:162.5px">74 72 61 6B OO OO OO 5C</span><span class="m" style="left:324.5px">      l trak    </span><svg style="left:325px;top:3px" width="96" height="6" viewBox="0 0 96 6" shape-rendering="crispEdges"><path fill="#000" d="M2 5h1v1h-1zM8 5h1v1h-1zM14 5h1v1h-1zM20 5h1v1h-1zM26 5h1v1h-1zM32 5h1v1h-1zM44 5h1v1h-1zM74 5h1v1h-1zM80 5h1v1h-1zM86 5h1v1h-1zM92 5h1v1h-1z"/></svg></div>
<div class="hr" style="top:132px"><span class="m" style="left:0.5px">74 6B 68 64 OO OO OO O1</span><span class="m" style="left:162.5px">DA 25 22 45 DA 25 22 45</span><span class="m" style="left:324.5px">tkhd            </span><svg style="left:325px;top:3px" width="96" height="6" viewBox="0 0 96 6" shape-rendering="crispEdges"><path fill="#000" d="M26 5h1v1h-1zM32 5h1v1h-1zM38 5h1v1h-1zM44 5h1v1h-1zM50 5h1v1h-1zM56 5h1v1h-1zM62 5h1v1h-1zM68 5h1v1h-1zM74 5h1v1h-1zM80 5h1v1h-1zM86 5h1v1h-1zM92 5h1v1h-1z"/></svg></div>
<div class="hr" style="top:148px"><span class="m" style="left:0.5px">OO OO OO O1 OO OO OO OO</span><span class="m" style="left:162.5px">OO 1D 33 A1 OO OO OO OO</span><span class="m" style="left:324.5px">                </span><svg style="left:325px;top:3px" width="96" height="6" viewBox="0 0 96 6" shape-rendering="crispEdges"><path fill="#000" d="M2 5h1v1h-1zM8 5h1v1h-1zM14 5h1v1h-1zM20 5h1v1h-1zM26 5h1v1h-1zM32 5h1v1h-1zM38 5h1v1h-1zM44 5h1v1h-1zM50 5h1v1h-1zM56 5h1v1h-1zM62 5h1v1h-1zM68 5h1v1h-1zM74 5h1v1h-1zM80 5h1v1h-1zM86 5h1v1h-1zM92 5h1v1h-1z"/></svg></div>
<div class="hr" style="top:164px"><span class="m" style="left:0.5px">OO OO OO OO OO OO OO OO</span><span class="m" style="left:162.5px">OO OO OO OO OO O1 OO OO</span><span class="m" style="left:324.5px">                </span><svg style="left:325px;top:3px" width="96" height="6" viewBox="0 0 96 6" shape-rendering="crispEdges"><path fill="#000" d="M2 5h1v1h-1zM8 5h1v1h-1zM14 5h1v1h-1zM20 5h1v1h-1zM26 5h1v1h-1zM32 5h1v1h-1zM38 5h1v1h-1zM44 5h1v1h-1zM50 5h1v1h-1zM56 5h1v1h-1zM62 5h1v1h-1zM68 5h1v1h-1zM74 5h1v1h-1zM80 5h1v1h-1zM86 5h1v1h-1zM92 5h1v1h-1z"/></svg></div>
<div class="hr" style="top:180px"><span class="m" style="left:0.5px">OO OO OO OO OO OO OO OO</span><span class="m" style="left:162.5px">OO OO OO OO OO O1 OO OO</span><span class="m" style="left:324.5px">                </span><svg style="left:325px;top:3px" width="96" height="6" viewBox="0 0 96 6" shape-rendering="crispEdges"><path fill="#000" d="M2 5h1v1h-1zM8 5h1v1h-1zM14 5h1v1h-1zM20 5h1v1h-1zM26 5h1v1h-1zM32 5h1v1h-1zM38 5h1v1h-1zM44 5h1v1h-1zM50 5h1v1h-1zM56 5h1v1h-1zM62 5h1v1h-1zM68 5h1v1h-1zM74 5h1v1h-1zM80 5h1v1h-1zM86 5h1v1h-1zM92 5h1v1h-1z"/></svg></div>
<div class="hr" style="top:196px"><span class="m" style="left:0.5px">OO OO OO OO OO OO OO OO</span><span class="m" style="left:162.5px">OO OO OO OO 4O OO OO OO</span><span class="m" style="left:324.5px">                </span><svg style="left:325px;top:3px" width="96" height="6" viewBox="0 0 96 6" shape-rendering="crispEdges"><path fill="#000" d="M2 5h1v1h-1zM8 5h1v1h-1zM14 5h1v1h-1zM20 5h1v1h-1zM26 5h1v1h-1zM32 5h1v1h-1zM38 5h1v1h-1zM44 5h1v1h-1zM50 5h1v1h-1zM56 5h1v1h-1zM62 5h1v1h-1zM68 5h1v1h-1zM74 5h1v1h-1zM80 5h1v1h-1zM86 5h1v1h-1zM92 5h1v1h-1z"/></svg></div>
<div class="hr" style="top:212px"><span class="m" style="left:0.5px">O7 8O OO OO O4 38 OO OO</span><span class="m" style="left:162.5px">OO OO 6B EA 6D 64 69 61</span><span class="m" style="left:324.5px">          k  dia</span><svg style="left:325px;top:3px" width="96" height="6" viewBox="0 0 96 6" shape-rendering="crispEdges"><path fill="#000" d="M73 1h5v1h-5zM73 2h1v1h-1zM75 2h1v1h-1zM77 2h1v1h-1zM73 3h1v1h-1zM75 3h1v1h-1zM77 3h1v1h-1zM73 4h1v1h-1zM75 4h1v1h-1zM77 4h1v1h-1zM2 5h1v1h-1zM8 5h1v1h-1zM14 5h1v1h-1zM20 5h1v1h-1zM26 5h1v1h-1zM32 5h1v1h-1zM38 5h1v1h-1zM44 5h1v1h-1zM50 5h1v1h-1zM56 5h1v1h-1zM68 5h1v1h-1zM73 5h1v1h-1zM75 5h1v1h-1zM77 5h1v1h-1z"/></svg></div>
<div class="hr" style="top:228px"><span class="m" style="left:0.5px">OO OO OO 2O 6D 64 68 64</span><span class="m" style="left:162.5px">OO OO OO OO DA 25 22 45</span><span class="m" style="left:324.5px">     dhd        </span><svg style="left:325px;top:3px" width="96" height="6" viewBox="0 0 96 6" shape-rendering="crispEdges"><path fill="#000" d="M25 1h5v1h-5zM25 2h1v1h-1zM27 2h1v1h-1zM29 2h1v1h-1zM25 3h1v1h-1zM27 3h1v1h-1zM29 3h1v1h-1zM25 4h1v1h-1zM27 4h1v1h-1zM29 4h1v1h-1zM2 5h1v1h-1zM8 5h1v1h-1zM14 5h1v1h-1zM20 5h1v1h-1zM25 5h1v1h-1zM27 5h1v1h-1zM29 5h1v1h-1zM50 5h1v1h-1zM56 5h1v1h-1zM62 5h1v1h-1zM68 5h1v1h-1zM74 5h1v1h-1zM80 5h1v1h-1zM86 5h1v1h-1zM92 5h1v1h-1z"/></svg></div>
<div class="hr" style="top:244px"><span class="m" style="left:0.5px">DA 25 22 45 OO OO EA 6O</span><span class="m" style="left:162.5px">OO 1D 33 A1 55 C4 OO OO</span><span class="m" style="left:324.5px">                </span><svg style="left:325px;top:3px" width="96" height="6" viewBox="0 0 96 6" shape-rendering="crispEdges"><path fill="#000" d="M2 5h1v1h-1zM8 5h1v1h-1zM14 5h1v1h-1zM20 5h1v1h-1zM26 5h1v1h-1zM32 5h1v1h-1zM38 5h1v1h-1zM44 5h1v1h-1zM50 5h1v1h-1zM56 5h1v1h-1zM62 5h1v1h-1zM68 5h1v1h-1zM74 5h1v1h-1zM80 5h1v1h-1zM86 5h1v1h-1zM92 5h1v1h-1z"/></svg></div>
<div class="hr" style="top:260px"><span class="m" style="left:0.5px">OO OO OO 2D 68 64 6C 72</span><span class="m" style="left:162.5px">OO OO OO OO OO OO OO OO</span><span class="m" style="left:324.5px">    hdlr        </span><svg style="left:325px;top:3px" width="96" height="6" viewBox="0 0 96 6" shape-rendering="crispEdges"><path fill="#000" d="M2 5h1v1h-1zM8 5h1v1h-1zM14 5h1v1h-1zM20 5h1v1h-1zM50 5h1v1h-1zM56 5h1v1h-1zM62 5h1v1h-1zM68 5h1v1h-1zM74 5h1v1h-1zM80 5h1v1h-1zM86 5h1v1h-1zM92 5h1v1h-1z"/></svg></div>
<div class="hr" style="top:276px"><span class="m" style="left:0.5px">76 69 64 65 OO OO OO OO</span><span class="m" style="left:162.5px">OO OO OO OO OO OO OO OO</span><span class="m" style="left:324.5px">vide            </span><svg style="left:325px;top:3px" width="96" height="6" viewBox="0 0 96 6" shape-rendering="crispEdges"><path fill="#000" d="M26 5h1v1h-1zM32 5h1v1h-1zM38 5h1v1h-1zM44 5h1v1h-1zM50 5h1v1h-1zM56 5h1v1h-1zM62 5h1v1h-1zM68 5h1v1h-1zM74 5h1v1h-1zM80 5h1v1h-1zM86 5h1v1h-1zM92 5h1v1h-1z"/></svg></div>
<div class="hr" style="top:292px"><span class="m" style="left:0.5px">56 69 64 65 6F 48 61 6E</span><span class="m" style="left:162.5px">64 6C 65 72 OO OO OO 6B</span><span class="m" style="left:324.5px"> ideo andler   k</span><svg style="left:325px;top:3px" width="96" height="6" viewBox="0 0 96 6" shape-rendering="crispEdges"><path fill="#000" d="M2 5h1v1h-1zM32 5h1v1h-1zM74 5h1v1h-1zM80 5h1v1h-1zM86 5h1v1h-1z"/></svg></div>
<div class="hr" style="top:308px"><span class="m" style="left:0.5px">95 6D 69 6E 66 OO OO OO</span><span class="m" style="left:162.5px">14 76 6D 68 64 OO OO OO</span><span class="m" style="left:324.5px">  inf    v hd   </span><svg style="left:325px;top:3px" width="96" height="6" viewBox="0 0 96 6" shape-rendering="crispEdges"><path fill="#000" d="M7 1h5v1h-5zM61 1h5v1h-5zM7 2h1v1h-1zM9 2h1v1h-1zM11 2h1v1h-1zM61 2h1v1h-1zM63 2h1v1h-1zM65 2h1v1h-1zM7 3h1v1h-1zM9 3h1v1h-1zM11 3h1v1h-1zM61 3h1v1h-1zM63 3h1v1h-1zM65 3h1v1h-1zM7 4h1v1h-1zM9 4h1v1h-1zM11 4h1v1h-1zM61 4h1v1h-1zM63 4h1v1h-1zM65 4h1v1h-1zM2 5h1v1h-1zM7 5h1v1h-1zM9 5h1v1h-1zM11 5h1v1h-1zM32 5h1v1h-1zM38 5h1v1h-1zM44 5h1v1h-1zM50 5h1v1h-1zM61 5h1v1h-1zM63 5h1v1h-1zM65 5h1v1h-1zM80 5h1v1h-1zM86 5h1v1h-1zM92 5h1v1h-1z"/></svg></div>
<div class="hr" style="top:324px"><span class="m" style="left:0.5px">O1 OO OO OO OO OO OO OO</span><span class="m" style="left:162.5px">OO OO OO OO 24 64 69 6E</span><span class="m" style="left:324.5px">             din</span><svg style="left:325px;top:3px" width="96" height="6" viewBox="0 0 96 6" shape-rendering="crispEdges"><path fill="#000" d="M2 5h1v1h-1zM8 5h1v1h-1zM14 5h1v1h-1zM20 5h1v1h-1zM26 5h1v1h-1zM32 5h1v1h-1zM38 5h1v1h-1zM44 5h1v1h-1zM50 5h1v1h-1zM56 5h1v1h-1zM62 5h1v1h-1zM68 5h1v1h-1zM74 5h1v1h-1z"/></svg></div>
<div class="hr" style="top:340px"><span class="m" style="left:0.5px">66 OO OO OO 1C 64 72 65</span><span class="m" style="left:162.5px">66 OO OO OO OO OO OO OO</span><span class="m" style="left:324.5px">f    dref       </span><svg style="left:325px;top:3px" width="96" height="6" viewBox="0 0 96 6" shape-rendering="crispEdges"><path fill="#000" d="M8 5h1v1h-1zM14 5h1v1h-1zM20 5h1v1h-1zM26 5h1v1h-1zM56 5h1v1h-1zM62 5h1v1h-1zM68 5h1v1h-1zM74 5h1v1h-1zM80 5h1v1h-1zM86 5h1v1h-1zM92 5h1v1h-1z"/></svg></div>
<div style="left:596px;top:0;width:16px;height:347px;background:#f0f0f0"></div>
<div style="left:596px;top:17px;width:15px;height:51px;background:#cdcdcd"></div>
<svg style="left:596px;top:0" width="17" height="347" viewBox="0 0 17 347">
 <path d="M4.2 10.8L7.5 7.5L10.8 10.8" stroke="#606060" stroke-width="2" fill="none"/>
 <path d="M4.2 336.7L7.5 340L10.8 336.7" stroke="#606060" stroke-width="2" fill="none"/>
</svg>
</div></div>

<!-- status -->
<div class="pane" style="left:13px;top:618px;width:426px"></div>
<div class="pane" style="left:441px;top:618px;width:224px"></div>
<div class="pane" style="left:667px;top:618px;width:208px"></div>
<div class="st" style="left:15px;top:620px;letter-spacing:.84px">C:\demo\demo1.mp4</div>
<div class="st" style="left:443px;top:620px;letter-spacing:.4px">57182221-368880D-1084015</div>
<div id="wm"><span style="left:0px">h</span><span style="left:56px">t</span><span style="left:91px">t</span><span style="left:129px">p</span><span style="left:183px">s</span><span style="left:229.5px">:</span><span style="left:253.6px">/</span><span style="left:287px">/</span><span style="left:324px">z</span><span style="left:368px">z</span><span style="left:411px">s</span><span style="left:457.5px">l</span><span style="left:479.5px">n</span><span style="left:534px">.</span><span style="left:562.5px">c</span><span style="left:611.5px">o</span><span style="left:670px">m</span></div>
</body></html>
